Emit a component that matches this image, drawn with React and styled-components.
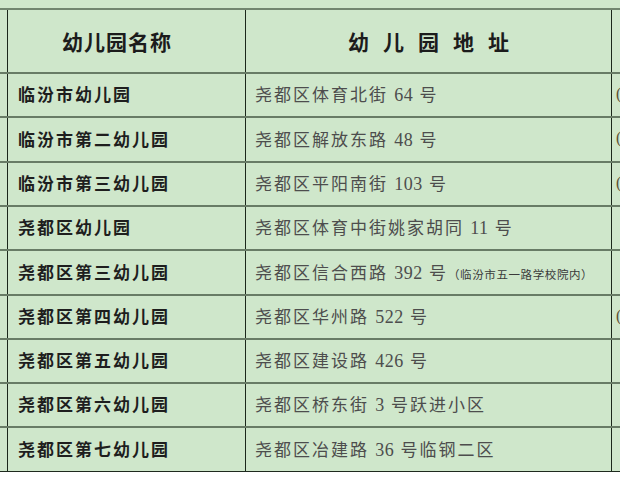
import React from 'react';
import styled, { createGlobalStyle } from 'styled-components';

const GlobalStyle = createGlobalStyle`
  html, body {
    margin: 0;
    padding: 0;
    background: #ffffff;
  }
  body {
    font-family: "Liberation Serif", "Noto Sans CJK SC", serif;
  }
`;

const rows = [
  { name: '临汾市幼儿园', addr: '尧都区体育北街 64 号', tail: true, h: 44 },
  { name: '临汾市第二幼儿园', addr: '尧都区解放东路 48 号', tail: true, h: 45 },
  { name: '临汾市第三幼儿园', addr: '尧都区平阳南街 103 号', tail: true, h: 44 },
  { name: '尧都区幼儿园', addr: '尧都区体育中街姚家胡同 11 号', h: 44 },
  { name: '尧都区第三幼儿园', addr: '尧都区信合西路 392 号', note: '（临汾市五一路学校院内）', h: 45 },
  { name: '尧都区第四幼儿园', addr: '尧都区华州路 522 号', tail: true, h: 44 },
  { name: '尧都区第五幼儿园', addr: '尧都区建设路 426 号', h: 44 },
  { name: '尧都区第六幼儿园', addr: '尧都区桥东街 3 号跃进小区', h: 44 },
  { name: '尧都区第七幼儿园', addr: '尧都区冶建路 36 号临钢二区', h: 45 },
];

// split digits out so they can be set tighter than the CJK characters
const renderAddr = addr =>
  addr.split(/(\d+)/).map((part, i) =>
    /^\d+$/.test(part) ? <Num key={i}>{part}</Num> : part
  );

export default function App() {
  return (
    <>
      <GlobalStyle />
      <Page>
        <TopStrip />
        <Table>
          <Row $h={62}>
            <Edge />
            <HeadCell $shift={20}>
              <HeadText>幼儿园名称</HeadText>
            </HeadCell>
            <HeadCell>
              <HeadText $wide>幼儿园地址</HeadText>
            </HeadCell>
            <Tail />
          </Row>
          {rows.map((r, i) => (
            <Row key={i} $h={r.h}>
              <Edge />
              <NameCell>{r.name}</NameCell>
              <AddrCell>
                <AddrText>
                  {renderAddr(r.addr)}
                  {r.note && <Note>{r.note}</Note>}
                </AddrText>
              </AddrCell>
              <Tail>{r.tail ? '(' : ''}</Tail>
            </Row>
          ))}
        </Table>
      </Page>
    </>
  );
}

const Page = styled.div`
  width: 620px;
  height: 477px;
  overflow: hidden;
  background: #ffffff;
`;

const TopStrip = styled.div`
  height: 8px;
  background: #cfe7cb;
`;

const Table = styled.div`
  background: #cfe7cb;
  border-top: 2px solid #71856f;
  border-bottom: 1px solid #1e2a1e;
`;

const Row = styled.div`
  display: grid;
  grid-template-columns: 7px 238px 366px 1fr;
  height: ${p => p.$h}px;
  box-sizing: border-box;
  & + & {
    border-top: 2px solid #687c66;
  }
`;

const Edge = styled.div``;

const Cell = styled.div`
  display: flex;
  align-items: center;
  border-left: 1px solid #1b281b;
  overflow: hidden;
  white-space: nowrap;
`;

const HeadCell = styled(Cell)`
  justify-content: center;
  padding-right: ${p => p.$shift || 0}px;
`;

const HeadText = styled.span`
  font-family: "Noto Sans CJK SC", sans-serif;
  font-size: 21px;
  font-weight: 700;
  color: #1c1c1c;
  letter-spacing: ${p => (p.$wide ? '14px' : '1px')};
  margin-right: ${p => (p.$wide ? '-14px' : '-1px')};
`;

const NameCell = styled(Cell)`
  padding-left: 10px;
  padding-bottom: 3px;
  font-family: "Noto Sans CJK SC", sans-serif;
  font-size: 17px;
  font-weight: 700;
  letter-spacing: 2px;
  color: #1e1e1e;
`;

const AddrCell = styled(Cell)`
  padding-left: 9px;
  padding-bottom: 3px;
`;

const AddrText = styled.span`
  font-family: "Liberation Serif", "Noto Sans CJK SC", serif;
  font-size: 17px;
  letter-spacing: 2px;
  color: #4d4d4d;
  white-space: pre;
`;

const Num = styled.span`
  font-size: 18px;
  letter-spacing: 0.5px;
`;

const Note = styled.span`
  font-family: "Noto Sans CJK SC", sans-serif;
  font-size: 11.5px;
  letter-spacing: 0.6px;
  color: #3a3a3a;
`;

const Tail = styled(Cell)`
  padding-left: 4px;
  padding-bottom: 3px;
  font-family: "Liberation Serif", serif;
  font-size: 16px;
  color: #5c5233;
`;
